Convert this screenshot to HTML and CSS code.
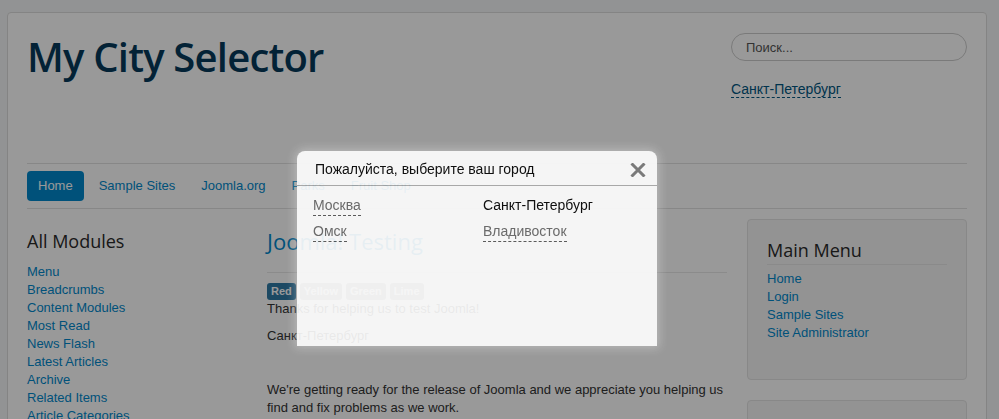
FILE: index.html
```html
<!DOCTYPE html>
<html lang="ru">
<head>
<meta charset="utf-8">
<title>My City Selector</title>
<link rel="stylesheet" href="styles.css">
</head>
<body>
<div class="page">
  <div class="container">
    <header class="header">
      <h1 class="site-title">My City Selector</h1>
      <div class="header-side">
        <input class="search" type="text" placeholder="Поиск...">
        <div class="city-line"><a class="city-link" href="#">Санкт-Петербург</a></div>
      </div>
    </header>
    <nav class="navigation">
      <ul class="nav-pills">
        <li><a class="active" href="#">Home</a></li>
        <li><a href="#">Sample Sites</a></li>
        <li><a href="#">Joomla.org</a></li>
        <li><a href="#">Parks</a></li>
        <li><a href="#">Fruit Shop</a></li>
      </ul>
    </nav>
    <div class="row">
      <aside class="sidebar-left">
        <h3 class="module-title">All Modules</h3>
        <ul class="menu">
          <li><a href="#">Menu</a></li>
          <li><a href="#">Breadcrumbs</a></li>
          <li><a href="#">Content Modules</a></li>
          <li><a href="#">Most Read</a></li>
          <li><a href="#">News Flash</a></li>
          <li><a href="#">Latest Articles</a></li>
          <li><a href="#">Archive</a></li>
          <li><a href="#">Related Items</a></li>
          <li><a href="#">Article Categories</a></li>
        </ul>
      </aside>
      <main class="content">
        <h2 class="page-header">Joomla! Testing</h2>
        <div class="labels">
          <span class="label label-info">Red</span>
          <span class="label">Yellow</span>
          <span class="label">Green</span>
          <span class="label">Lime</span>
        </div>
        <p>Thanks for helping us to test Joomla!</p>
        <p>Санкт-Петербург</p>
        <p>&nbsp;</p>
        <p>We're getting ready for the release of Joomla and we appreciate you helping us find and fix problems as we work.</p>
      </main>
      <aside class="sidebar-right">
        <div class="well">
          <h3 class="module-title underlined">Main Menu</h3>
          <ul class="menu">
            <li><a href="#">Home</a></li>
            <li><a href="#">Login</a></li>
            <li><a href="#">Sample Sites</a></li>
            <li><a href="#">Site Administrator</a></li>
          </ul>
        </div>
        <div class="well well-empty"></div>
      </aside>
    </div>
  </div>
</div>

<div class="overlay"></div>

<div class="modal">
  <div class="modal-header">
    <span class="modal-title">Пожалуйста, выберите ваш город</span>
    <button class="modal-close" type="button" aria-label="Закрыть">
      <svg width="16" height="14" viewBox="0 0 16 14"><path d="M1.5 0.5 L14.5 13.5 M14.5 0.5 L1.5 13.5" stroke="#777" stroke-width="3" fill="none"/></svg>
    </button>
  </div>
  <div class="modal-body">
    <a class="city" href="#">Москва</a>
    <span class="city current">Санкт-Петербург</span>
    <a class="city" href="#">Омск</a>
    <a class="city" href="#">Владивосток</a>
  </div>
</div>
</body>
</html>
```

FILE: styles.css
```css
html, body {
  margin: 0;
  padding: 0;
  height: 100%;
  overflow: hidden;
}

body {
  background: #f4f6f7;
  font-family: "Liberation Sans", Arial, sans-serif;
  font-size: 13px;
  line-height: 18px;
  color: #333;
}

a {
  color: #0088cc;
  text-decoration: none;
}

ul {
  list-style: none;
  margin: 0;
  padding: 0;
}

p {
  margin: 0 0 9px;
}

.page {
  padding: 12px 0 0 7px;
}

.container {
  width: 940px;
  padding: 19px;
  border: 1px solid #dcdcdc;
  border-radius: 4px;
  background: #fff;
}

/* header */
.header {
  display: flex;
  justify-content: space-between;
  height: 111px;
  margin-bottom: 20px;
}

.site-title {
  margin: 0;
  font-family: "Open Sans", sans-serif;
  font-size: 40px;
  line-height: 49px;
  font-weight: 600;
  letter-spacing: -0.8px;
  color: #063a5a;
}

.header-side {
  width: 236px;
}

.search {
  display: block;
  box-sizing: border-box;
  width: 236px;
  height: 28px;
  margin: 1px 0 0;
  padding: 0 14px;
  border: 1px solid #cccccc;
  border-radius: 14px;
  background: #fff;
  font-family: "Liberation Sans", Arial, sans-serif;
  font-size: 13px;
  color: #555;
}

.search::placeholder {
  color: #555;
}

.city-line {
  margin-top: 18px;
  font-size: 14px;
  line-height: 20px;
}

.city-link {
  color: #005580;
  border-bottom: 1px dashed #005580;
}

/* navigation */
.navigation {
  border-top: 1px solid #e2e2e2;
  border-bottom: 1px solid #e2e2e2;
  padding: 7px 0;
}

.nav-pills {
  display: flex;
  gap: 4px;
}

.nav-pills a {
  display: block;
  padding: 6px 11px;
  border-radius: 4px;
  color: #0088cc;
}

.nav-pills a.active {
  background: #0088cc;
  color: #fff;
}

/* columns */
.row {
  display: grid;
  grid-template-columns: 220px 460px 220px;
  column-gap: 20px;
  margin-top: 10px;
}

.module-title {
  margin: 10px 0 10px;
  font-family: "Open Sans", sans-serif;
  font-size: 18px;
  line-height: 24px;
  font-weight: 500;
  color: #2a2a2a;
}

.module-title.underlined {
  margin: 0 0 5px;
  padding-bottom: 2px;
  border-bottom: 1px solid #e6e6e6;
}

.page-header {
  margin: 8px 0 0;
  padding-bottom: 17px;
  border-bottom: 1px solid #e8e8e8;
  font-family: "Open Sans", sans-serif;
  font-size: 22px;
  line-height: 28px;
  font-weight: 400;
  color: #0088cc;
}

.labels {
  display: flex;
  gap: 4px;
  margin-top: 10px;
}

.label {
  padding: 2px 4px;
  border-radius: 3px;
  background: #999;
  color: #fff;
  font-size: 11px;
  line-height: 13px;
  font-weight: bold;
}

.label-info {
  background: #2f7aa6;
}

.well {
  padding: 18px 19px 19px;
  margin-bottom: 20px;
  border: 1px solid #e3e3e3;
  border-radius: 4px;
  background: #f5f5f5;
}

.well .menu {
  margin-bottom: 18px;
}

.well-empty {
  height: 80px;
}

/* overlay + modal */
.overlay {
  position: fixed;
  inset: 0;
  background: rgba(0, 0, 0, 0.4);
}

.modal {
  position: fixed;
  left: 297px;
  top: 151px;
  width: 360px;
  height: 195px;
  background: #fff;
  opacity: 0.9;
  border-radius: 8px 8px 0 0;
  box-shadow: 0 0 10px 2px rgba(255, 255, 255, 0.35);
  font-family: "Liberation Sans", Arial, sans-serif;
  font-size: 14px;
  line-height: 20px;
}

.modal-header {
  display: flex;
  justify-content: space-between;
  align-items: center;
  padding: 8px 11px 6px 18px;
  border-bottom: 1px solid #aaaaaa;
}

.modal-title {
  color: #000;
}

.modal-close {
  display: flex;
  padding: 0;
  margin-top: 2px;
  border: 0;
  background: none;
}

.modal-body {
  display: grid;
  grid-template-columns: 170px 170px;
  row-gap: 5px;
  padding: 9px 16px;
  justify-items: start;
}

.city {
  color: #666;
  border-bottom: 1px dashed #555;
}

.city.current {
  color: #000;
  border-bottom: 0;
}
```
